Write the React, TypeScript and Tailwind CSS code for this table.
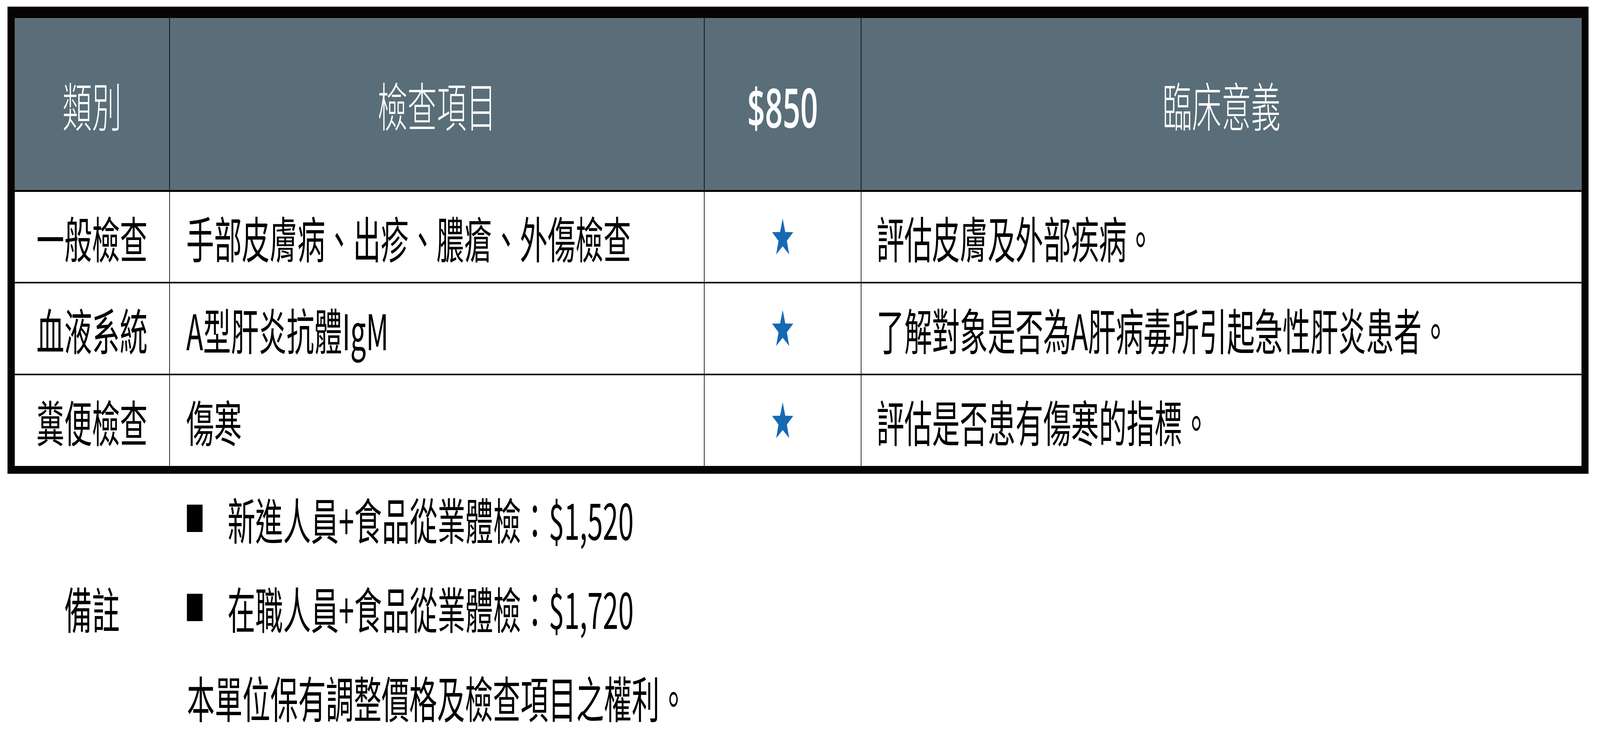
import React, { useEffect, useState } from "react";

const Star = () => (
  <svg width="100" height="95" viewBox="0 0 100 95" className="block">
    <polygon
      points="50,0 61.8,34.5 98,35 69,57 79.5,92 50,71 20.5,92 31,57 2,35 38.2,34.5"
      fill="#1669b3"
    />
  </svg>
);

const rows = [
  {
    cat: "一般檢查",
    item: "手部皮膚病、出疹、膿瘡、外傷檢查",
    desc: "評估皮膚及外部疾病。",
  },
  {
    cat: "血液系統",
    item: "A型肝炎抗體IgM",
    desc: "了解對象是否為A肝病毒所引起急性肝炎患者。",
  },
  {
    cat: "糞便檢查",
    item: "傷寒",
    desc: "評估是否患有傷寒的指標。",
  },
];

const DESIGN_W = 7251;

function useFitScale() {
  const get = () =>
    typeof window === "undefined" ? 1 : Math.min(1, window.innerWidth / DESIGN_W);
  const [s, setS] = useState(get);
  useEffect(() => {
    const on = () => setS(get());
    window.addEventListener("resize", on);
    return () => window.removeEventListener("resize", on);
  }, []);
  return s;
}

export default function App() {
  const sx = useFitScale();
  return (
    <div className="w-full h-[1888px] bg-white overflow-hidden">
      <div
        className="w-[7251px] h-[1888px] bg-white origin-top-left font-['Noto_Sans_CJK_TC','Noto_Sans_CJK_SC',sans-serif] text-black"
        style={{ transform: `scaleX(${sx})` }}
      >
        <div className="pt-[17px] pl-[34px]">
          <div className="w-[7165px] border-t-[29px] border-l-[33px] border-r-[32px] border-b-[20px] border-[#070303]">
            {/* header */}
            <div className="grid grid-cols-[700px_2423px_711px_3266px] h-[440px] bg-[#596e78] text-white">
              <div className="flex items-center justify-center text-[134px] font-light leading-none">類別</div>
              <div className="flex items-center justify-center border-l-[3px] border-[#070303] text-[134px] font-light leading-none">檢查項目</div>
              <div className="flex items-center justify-center border-l-[3px] border-[#070303] text-[140px] font-semibold leading-none font-['Open_Sans','Noto_Sans_CJK_TC',sans-serif] pt-[14px]">$850</div>
              <div className="flex items-center justify-center border-l-[3px] border-[#070303] text-[134px] font-light leading-none">臨床意義</div>
            </div>
            {rows.map((r, i) => (
              <div
                key={i}
                className={
                  i === 0
                    ? "grid grid-cols-[700px_2423px_711px_3266px] h-[235px] border-t-[5px] border-[#070303]"
                    : i === 1
                    ? "grid grid-cols-[700px_2423px_711px_3266px] h-[235px] border-t-[4px] border-[#070303]"
                    : "grid grid-cols-[700px_2423px_711px_3266px] h-[236px] border-t-[4px] border-[#070303]"
                }
              >
                <div className="flex items-center justify-center text-[126px] leading-none">{r.cat}</div>
                <div className="flex items-center border-l-[3px] border-[#070303] pl-[74px] text-[126px] leading-none whitespace-nowrap">{r.item}</div>
                <div className="flex items-center justify-center border-l-[3px] border-[#070303]">
                  <Star />
                </div>
                <div className="flex items-center border-l-[3px] border-[#070303] pl-[68px] text-[126px] leading-none whitespace-nowrap">{r.desc}</div>
              </div>
            ))}
          </div>
        </div>
        {/* notes */}
        <div className="flex ml-[67px] text-[126px] leading-[228px]">
          <div className="w-[700px] flex items-center justify-center">備註</div>
          <div className="flex flex-col pl-[80px]">
            <div className="flex items-center h-[228px] whitespace-nowrap">
              <span className="inline-block w-[71px] h-[70px] bg-black mr-[113px]" />
              新進人員+食品從業體檢：$1,520
            </div>
            <div className="flex items-center h-[228px] whitespace-nowrap">
              <span className="inline-block w-[71px] h-[70px] bg-black mr-[113px]" />
              在職人員+食品從業體檢：$1,720
            </div>
            <div className="flex items-center h-[228px] whitespace-nowrap">本單位保有調整價格及檢查項目之權利。</div>
          </div>
        </div>
      </div>
    </div>
  );
}
